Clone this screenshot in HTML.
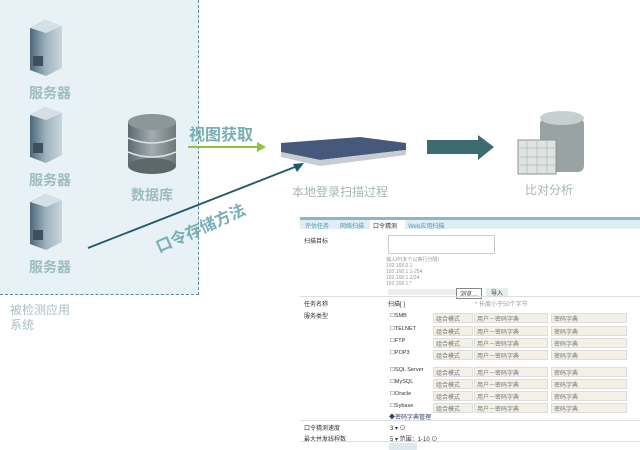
<!DOCTYPE html>
<html><head><meta charset="utf-8"><style>
body{margin:0;width:640px;height:450px;background:#fff;position:relative;overflow:hidden;font-family:"Liberation Sans","Noto Sans CJK SC",sans-serif}
.a{position:absolute}
.lbl{color:#9dbcc0;font-weight:bold;font-size:14px}
.f{font-size:6px;color:#333;white-space:nowrap}
.sel{position:absolute;height:8px;background:#f3f1e6;border:1px solid #ddd}
</style></head><body>
<div class="a" style="left:0;top:0;width:198px;height:294px;background:#e8f1f5;border:1px dashed #5a8ca0;border-left:none;border-top:none"></div>

<svg class="a" style="left:0;top:0" width="640" height="300">
<defs><linearGradient id="sv" x1="0" x2="1"><stop offset="0" stop-color="#4d6878"/><stop offset=".5" stop-color="#9fb3bf"/><stop offset="1" stop-color="#c9d6dd"/></linearGradient>
<linearGradient id="db" x1="0" x2="1"><stop offset="0" stop-color="#5c6a6e"/><stop offset=".5" stop-color="#a3adb0"/><stop offset="1" stop-color="#6c787b"/></linearGradient></defs>
<g id="s"><polygon points="30,28 45,20 62,26 62,68 46,76 30,70" fill="url(#sv)"/><polygon points="30,28 45,20 62,26 46,33" fill="#d5e0e6"/><rect x="33" y="56" width="10" height="10" fill="#3d4f5c"/></g>
<use href="#s" y="87"/><use href="#s" y="174"/>
<rect x="128" y="122" width="48" height="44" fill="url(#db)"/><ellipse cx="152" cy="122" rx="24" ry="8" fill="#8b979b"/><ellipse cx="152" cy="166" rx="24" ry="8" fill="#5c686b"/>
<path d="M128 138q24 10 48 0M128 152q24 10 48 0" stroke="#dde" stroke-width="1.5" fill="none"/>
<line x1="188" y1="147" x2="263" y2="147" stroke="#8cc43c" stroke-width="2"/><polygon points="266,147 257,142 257,152" fill="#8cc43c"/>
<line x1="88" y1="248" x2="300" y2="165" stroke="#1f5a6a" stroke-width="1.8"/><polygon points="304,163 293,164 297,172" fill="#1f5a6a"/>
<polygon points="281,143 360,137 406,143 406,150 320,160 281,152" fill="#47597a"/><polygon points="281,152 320,160 406,150 406,155 320,166 281,157" fill="#c7ccd2"/>
<rect x="427" y="140" width="53" height="14" fill="#3d6b70"/><polygon points="478,135 494,147 478,160" fill="#3d6b70"/>
<rect x="540" y="118" width="44" height="54" rx="6" fill="#9aa3a3"/><ellipse cx="562" cy="118" rx="22" ry="7" fill="#c8cfcf"/>
<rect x="518" y="140" width="38" height="34" fill="#dfe4e1" stroke="#8a9590"/>
<path d="M518 148h38M518 157h38M518 165h38M527 140v34M537 140v34M547 140v34" stroke="#b4bcb8" stroke-width=".8"/>
</svg>
<div class="a lbl" style="left:29px;top:83px">服务器</div>
<div class="a lbl" style="left:29px;top:170px">服务器</div>
<div class="a lbl" style="left:29px;top:257px">服务器</div>
<div class="a lbl" style="left:131px;top:185px">数据库</div>
<div class="a" style="left:189px;top:121px;font-size:16px;font-weight:bold;color:#78aeb5">视图获取</div>
<div class="a" style="left:152px;top:215px;font-size:16px;font-weight:bold;color:#78aeb5;transform:rotate(-24deg)">口令存储方法</div>
<div class="a" style="left:292px;top:183px;font-size:12px;color:#a8b4b6">本地登录扫描过程</div>
<div class="a" style="left:525px;top:181px;font-size:12px;color:#a8b4b6">比对分析</div>
<div class="a" style="left:10px;top:303px;font-size:12px;color:#a9bfc3;line-height:15px">被检测应用<br>系统</div>

<div class="a" style="left:300px;top:217px;width:340px;height:233px;background:#fff">
<div class="a" style="left:0;top:0;width:340px;height:3px;background:#8fb4c4"></div>
<div class="a" style="left:0;top:3px;width:340px;height:9px;background:#dfeef3"></div>
<div class="a f" style="left:5px;top:4px;color:#59a">评估任务</div>
<div class="a f" style="left:40px;top:4px;color:#59a">网络扫描</div>
<div class="a" style="left:70px;top:3px;width:35px;height:10px;background:#fff"></div>
<div class="a f" style="left:73px;top:4px">口令猜测</div>
<div class="a f" style="left:108px;top:4px;color:#59a">Web应用扫描</div>
<div class="a f" style="left:4px;top:19px">扫描目标</div>
<div class="a" style="left:88px;top:18px;width:105px;height:17px;border:1px solid #ccc"></div>
<div class="a f" style="left:86px;top:40px;color:#999;line-height:6px;font-size:5px">输入IP(多个以换行分隔)<br>192.168.0.1<br>192.168.1.1-254<br>192.168.1.1/24<br>192.168.1.*</div>
<div class="a" style="left:88px;top:72px;width:68px;height:6px;background:#eee"></div>
<div class="a f" style="left:156px;top:71px;border:1px solid #888;padding:0 3px">浏览…</div>
<div class="a f" style="left:186px;top:71px;background:#e6eef0;padding:0 5px">导入</div>
<div class="a" style="left:0;top:79px;width:340px;height:1px;background:#ddd"></div>
<div class="a f" style="left:4px;top:82px">任务名称</div>
<div class="a f" style="left:88px;top:82px">扫描[ ]</div>
<div class="a f" style="left:175px;top:82px;color:#999">* 长度小于50个字节</div>
<div class="a f" style="left:4px;top:94px">服务类型</div>
</div>
<div id="rows"></div>
<script>
var n=["SMB","TELNET","FTP","POP3","SQL Server","MySQL","Oracle","Sybase"],y=[313,326,338,350,367,379,391,403],h="";
for(var i=0;i<8;i++){h+='<div class="a f" style="left:390px;top:'+y[i]+'px;font-size:5.5px">☐'+n[i]+'</div>'+
'<div class="sel" style="left:433px;top:'+y[i]+'px;width:38px"></div><div class="a f" style="left:436px;top:'+(y[i]+1)+'px;color:#777">组合模式</div>'+
'<div class="sel" style="left:474px;top:'+y[i]+'px;width:72px"></div><div class="a f" style="left:477px;top:'+(y[i]+1)+'px;color:#777">用户－密码字典</div>'+
'<div class="sel" style="left:551px;top:'+y[i]+'px;width:74px"></div><div class="a f" style="left:554px;top:'+(y[i]+1)+'px;color:#777">密码字典</div>';}
h+='<div class="a f" style="left:389px;top:412px;color:#346">◆密码字典管理</div>';
h+='<div class="a" style="left:300px;top:420px;width:340px;height:1px;background:#ddd"></div>';
h+='<div class="a f" style="left:304px;top:423px">口令猜测速度</div><div class="a f" style="left:390px;top:423px">3 ▾ ⊙</div>';
h+='<div class="a f" style="left:304px;top:434px">最大并发线程数</div><div class="a f" style="left:390px;top:434px">5 ▾ 范围：1-10 ⊙</div>';
h+='<div class="a" style="left:300px;top:441px;width:340px;height:1px;background:#ddd"></div>';
h+='<div class="a" style="left:389px;top:443px;width:28px;height:7px;background:#dde9ee"></div>';
document.getElementById("rows").innerHTML=h;
</script>
</body></html>
